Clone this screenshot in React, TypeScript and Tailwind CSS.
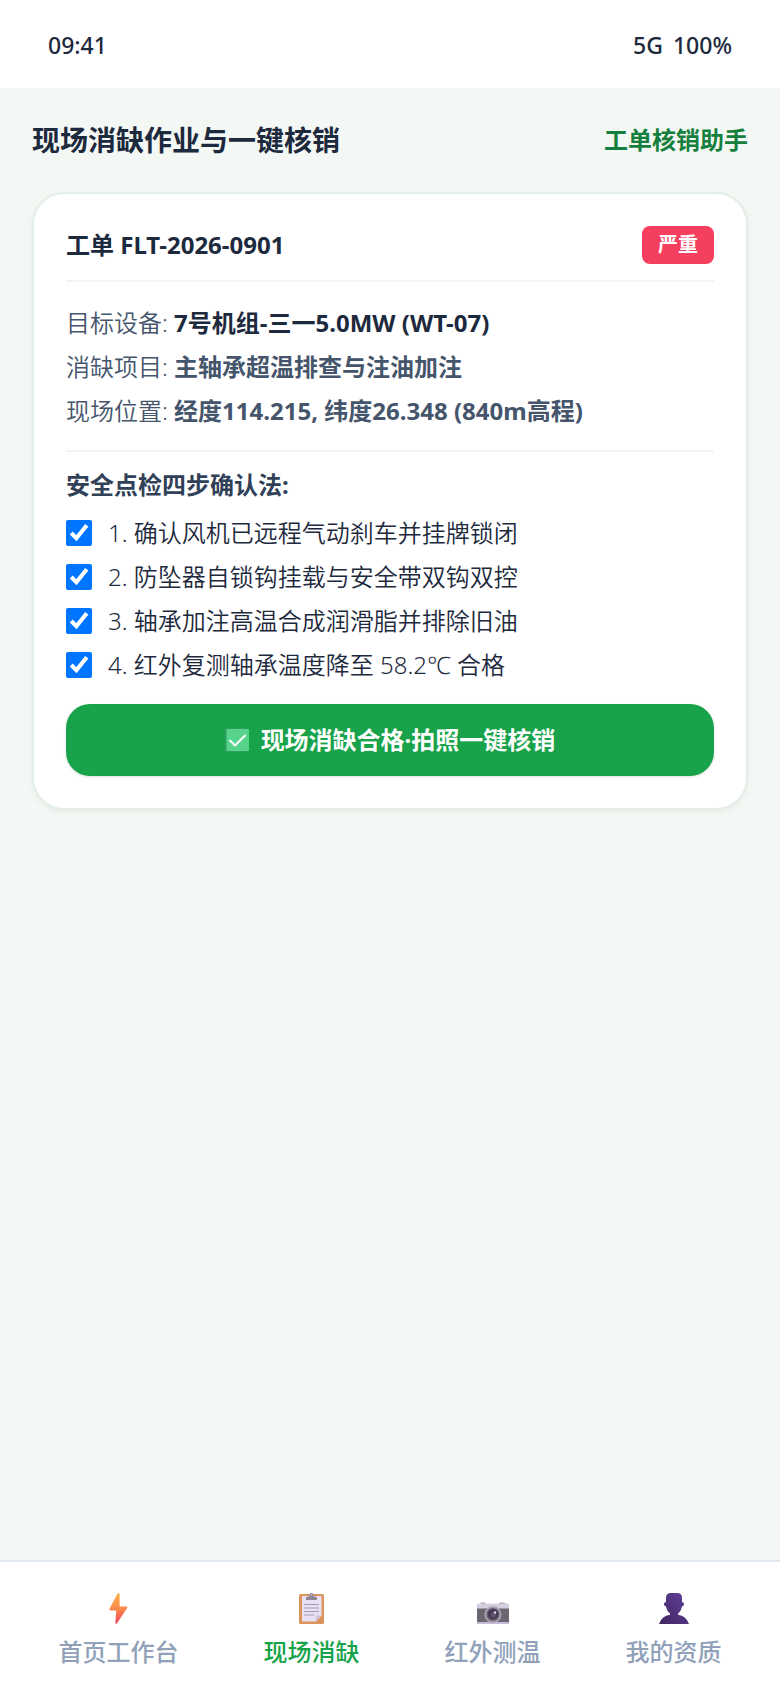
import React, { useState } from 'react';

const device = [
    { label: '目标设备', value: '7号机组-三一5.0MW (WT-07)', strong: true },
    { label: '消缺项目', value: '主轴承超温排查与注油加注' },
    { label: '现场位置', value: '经度114.215, 纬度26.348 (840m高程)' },
];

const steps = [
    '1. 确认风机已远程气动刹车并挂牌锁闭',
    '2. 防坠器自锁钩挂载与安全带双钩双控',
    '3. 轴承加注高温合成润滑脂并排除旧油',
    '4. 红外复测轴承温度降至 58.2℃ 合格',
];

function BoltIcon() {
    return (
        <svg className="size-8" viewBox="0 0 32 32" aria-hidden="true">
            <defs>
                <linearGradient id="bolt" x1="0" y1="0" x2="0" y2="1">
                    <stop offset="0" stopColor="#f9b04b" />
                    <stop offset="0.5" stopColor="#fb8a4a" />
                    <stop offset="1" stopColor="#f2405a" />
                </linearGradient>
            </defs>
            <path d="M14.600 1.600Q16 .6 16.600 2v12.500h6.800q1.400.2.800 1.600L14 31.200q-1.200 1.400-1.600-.2l.8-12.600H7.600Q6 18 6.600 16.600z" fill="url(#bolt)" />
        </svg>
    );
}

function ClipboardIcon() {
    return (
        <svg className="size-8" viewBox="0 0 32 32" aria-hidden="true">
            <rect x="3" y="2" width="25" height="30" rx="1.500" fill="#dd935c" />
            <path d="M6 4h19.500v19.500L20 29.500H6z" fill="#e8e1f3" />
            <path d="M25.500 23.500H21q-1 0-1 1v5z" fill="#cbbfdc" />
            <path d="M10 8V6.500Q10 4.500 12 4.500h1.500V3q0-2 2-2t2 2v1.500H19q2 0 2 2V8z" fill="#8d8595" />
            <circle cx="15.500" cy="3" r=".8" fill="#d6cfe0" />
            <path d="M8 12.500h15M8 16h15M8 19.500h15M8 23h10" stroke="#a49cb0" strokeWidth="1.200" />
        </svg>
    );
}

function CameraIcon() {
    return (
        <svg className="size-8" viewBox="0 0 32 32" aria-hidden="true">
            <rect x="3.500" y="10.500" width="5" height="2" rx="1" fill="#a29ba8" />
            <rect x="22" y="10.500" width="6" height="2" rx="1" fill="#a29ba8" />
            <rect x="0" y="12" width="32" height="20" rx="1.800" fill="#6b6670" />
            <path d="M0 16.500v-2.500q0-2.500 2.500-2.500h27q2.500 0 2.500 2.500v2.500z" fill="#d6cfe2" />
            <path d="M0 30h32q0 2-1.800 2H1.800Q0 32 0 30z" fill="#c8bcda" />
            <rect x="13.500" y="14" width="5" height="2" fill="#f4f0f8" />
            <circle cx="16" cy="22.500" r="8.500" fill="#aaa2b2" />
            <circle cx="16" cy="22.500" r="6.600" fill="#6a6074" />
            <circle cx="16" cy="22" r="5.200" fill="#463851" />
            <circle cx="16.500" cy="23" r="2.800" fill="#64516f" />
            <circle cx="18" cy="20.500" r="1.200" fill="#e4dcec" />
        </svg>
    );
}

function PersonIcon() {
    return (
        <svg className="size-8" viewBox="0 0 32 32" aria-hidden="true">
            <defs>
                <linearGradient id="person" x1="0" y1="1" x2="1" y2="0">
                    <stop offset="0" stopColor="#422562" />
                    <stop offset="1" stopColor="#60409a" />
                </linearGradient>
            </defs>
            <path d="M8 10V6q0-5 5-5h6q5 0 5 5v4q2 0 2 2t-2 2.500q-.8 4.500-4 7v1.200q8.500 1.300 11 9.300H1q2.500-8 11-9.300v-1.200q-3.200-2.500-4-7-2-.5-2-2.500t2-2z" fill="url(#person)" />
        </svg>
    );
}

function DoneIcon() {
    return (
        <svg className="size-6" viewBox="0 0 24 24" aria-hidden="true">
            <rect x="0" y="0" width="24" height="24" rx="1.500" fill="#2f9e62" />
            <rect x="1.500" y="1" width="22.500" height="22" rx="1" fill="#56d48c" />
            <path d="M5 12.500l5 5L20 7.500" fill="none" stroke="#fff" strokeWidth="2" strokeLinecap="round" strokeLinejoin="round" />
        </svg>
    );
}

const tabs = [
    { name: '首页工作台', icon: BoltIcon },
    { name: '现场消缺', icon: ClipboardIcon },
    { name: '红外测温', icon: CameraIcon },
    { name: '我的资质', icon: PersonIcon },
];

export default function App() {
    const [checked, setChecked] = useState([true, true, true, true]);
    const [active, setActive] = useState('现场消缺');

    const toggle = (index: number) => {
        setChecked(checked.map((c, i) => (i === index ? !c : c)));
    };

    return (
        <div className="min-h-screen flex flex-col bg-[#f4f8f5] text-slate-800 text-[24px] leading-8 font-['Noto_Sans','Noto_Sans_CJK_SC',sans-serif]">
            <header className="h-22 px-12 pt-0.5 flex items-center justify-between bg-white font-medium text-[23px]">
                <span>09:41</span>
                <div className="flex gap-2.5">
                    <span>5G</span>
                    <span>100%</span>
                </div>
            </header>

            <main className="flex-1 p-8">
                <div className="mb-8 flex items-center justify-between">
                    <h1 className="text-[28px] leading-10 font-bold">现场消缺作业与一键核销</h1>
                    <span className="font-bold text-[#15803d]">工单核销助手</span>
                </div>

                <section className="rounded-[32px] border-2 border-[#e2eee6] bg-white p-8 shadow-[0_2px_6px_rgba(0,0,0,0.05)]">
                    <div className="flex items-center justify-between border-b-2 border-slate-100 pb-4">
                        <h2 className="font-bold">工单 FLT-2026-0901</h2>
                        <span className="rounded-lg bg-[#f43f5e] px-4 py-1 text-[20px] leading-[30px] font-bold text-white">严重</span>
                    </div>

                    <div className="space-y-3 border-b-2 border-slate-100 pt-[25px] pb-[23px] text-slate-600">
                        {device.map((d) => (
                            <p key={d.label} className="font-[350]">
                                {d.label}: <strong className={d.strong ? 'font-bold text-slate-800' : 'font-bold'}>{d.value}</strong>
                            </p>
                        ))}
                    </div>

                    <h3 className="pt-[17px] font-bold text-slate-700">安全点检四步确认法:</h3>
                    <div className="mt-4 space-y-3">
                        {steps.map((step, i) => (
                            <label key={step} className="flex items-center gap-4 font-[350]">
                                <input
                                    type="checkbox"
                                    className="size-[26px]"
                                    checked={checked[i]}
                                    onChange={() => toggle(i)}
                                />
                                <span>{step}</span>
                            </label>
                        ))}
                    </div>

                    <button className="mt-[23px] flex w-full items-center justify-center gap-3 rounded-3xl bg-[#18a34a] py-5 font-bold text-white shadow-sm">
                        <DoneIcon />
                        现场消缺合格·拍照一键核销
                    </button>
                </section>
            </main>

            <nav className="flex justify-around border-t-2 border-slate-200 bg-white px-4 pt-[30px] pb-5">
                {tabs.map(({ name, icon: Icon }) => (
                    <button
                        key={name}
                        onClick={() => setActive(name)}
                        className={`flex flex-col items-center gap-3 font-medium ${active === name ? 'text-[#16a34a]' : 'text-slate-400'}`}
                    >
                        <Icon />
                        <span>{name}</span>
                    </button>
                ))}
            </nav>
        </div>
    );
}
